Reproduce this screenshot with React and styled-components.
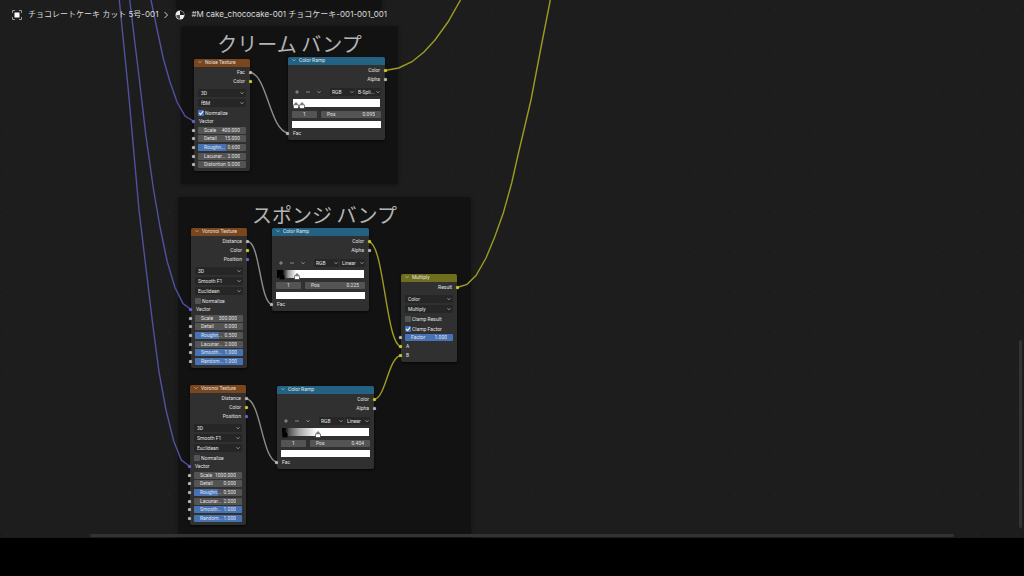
import { useState } from "react";
import styled, { createGlobalStyle } from "styled-components";

const GlobalStyled = createGlobalStyle`
  * {
    box-sizing: border-box;
    margin: 0;
    padding: 0;
  }

  body {
    background: #000;
    color: #e2e2e2;
    font-family: Roboto, "Noto Sans CJK JP", sans-serif;
    overflow: hidden;
  }

  button,
  input,
  select {
    font: inherit;
    color: inherit;
    border: none;
    background: none;
    outline: none;
    appearance: none;
  }
`;

const Layout = styled.div`
  display: flex;
  flex-direction: column;
  height: 100vh;
`;

const Canvas = styled.main`
  position: relative;
  flex: 1;
  min-height: 0;
  overflow: hidden;
  background: #1d1d1d;
`;

const Footer = styled.footer`
  height: 38px;
  background: #000;
`;

/* lies over the node canvas */
const Breadcrumb = styled.nav`
  position: absolute;
  z-index: 5;
  top: 8px;
  left: 12px;
  display: flex;
  align-items: center;
  height: 13px;
  font-family: Inter, "Noto Sans CJK JP", sans-serif;
  font-size: 8px;
  line-height: 13px;
  white-space: nowrap;
  color: #dcdcdc;

  a {
    color: inherit;
    text-decoration: none;
    margin-left: 6px;
  }

  svg {
    flex: none;
  }
`;

const CrumbArrow = styled.svg`
  margin: 0 5px 0 4px;
`;

const Layer = styled.svg`
  position: absolute;
  inset: 0;
  width: 100%;
  height: 100%;
  pointer-events: none;
`;

const Frame = styled.section`
  position: absolute;
  left: ${(props) => props.$x}px;
  top: ${(props) => props.$y}px;
  width: ${(props) => props.$w}px;
  height: ${(props) => props.$h}px;
  border-radius: 3px;
  background: #121212;
  box-shadow: 0 1px 4px rgba(0, 0, 0, 0.4);

  h2 {
    padding-top: 4px;
    font-family: "Noto Sans CJK JP", sans-serif;
    font-size: 20px;
    font-weight: 400;
    line-height: 28px;
    text-align: center;
    color: #b4b4b4;
  }
`;

const NodeBox = styled.article`
  position: absolute;
  left: ${(props) => props.$x}px;
  top: ${(props) => props.$y}px;
  width: ${(props) => props.$w}px;
  padding-bottom: 2px;
  border-radius: 2px;
  background: #303030;
  box-shadow: 0 1px 3px rgba(0, 0, 0, 0.7);
  font-size: 5px;
  line-height: 9px;
  white-space: nowrap;
`;

const NodeHead = styled.header`
  display: flex;
  align-items: center;
  gap: 3px;
  height: 8px;
  margin-bottom: 1px;
  padding: 0 0 2px 4px;
  border-radius: 2px 2px 0 0;
  background: ${(props) => props.$color};

  h3 {
    font-size: 5px;
    font-weight: 400;
    line-height: 6px;
  }
`;

const SocketRow = styled.div`
  position: relative;
  height: 9px;
  padding: 0 5px;
  text-align: ${(props) => (props.$out ? "right" : "left")};
`;

const Socket = styled.i`
  position: absolute;
  z-index: 2;
  top: 0;
  bottom: 0;
  ${(props) => (props.$out ? "right" : "left")}: -2px;
  width: 3px;
  height: 3px;
  margin: auto 0;
  border-radius: 50%;
  background: ${(props) => props.$color};
  box-shadow: 0 0 1px ${(props) => props.$color};
`;

const Stack = styled.div`
  display: grid;
  gap: 2px;
  margin-top: 3px;
  padding: 0 4px;
`;

const SelectWrap = styled.div`
  position: relative;
  height: 8px;
  border-radius: 1px;
  background: #262626;

  select {
    display: block;
    width: 100%;
    height: 8px;
    padding-left: 3px;
    line-height: 8px;
    text-overflow: clip;
  }

  svg {
    position: absolute;
    right: 2px;
    top: 3px;
  }
`;

const CheckLabel = styled.label`
  display: flex;
  align-items: center;
  gap: 1px;
  height: 8px;
  line-height: 8px;
`;

const CheckBox = styled.input`
  width: 6px;
  height: 6px;
  border-radius: 1px;
  background: #545454;

  &:checked {
    background: #4772b3
      url("data:image/svg+xml,%3Csvg xmlns='http://www.w3.org/2000/svg' viewBox='0 0 10 10'%3E%3Cpath d='M2 5l2.500 2.500L8.500 2' fill='none' stroke='white' stroke-width='1.800'/%3E%3C/svg%3E");
  }
`;

const Fields = styled.div`
  display: grid;
  grid-auto-rows: 1fr;
  align-items: center;
  height: ${(props) => props.$h}px;
`;

const FieldRow = styled.div`
  position: relative;
  padding: 0 4px;
`;

const Field = styled.label`
  position: relative;
  display: flex;
  align-items: center;
  justify-content: space-between;
  height: 7px;
  padding: 0 6px;
  overflow: hidden;
  border-radius: 1px;
  background: #545454;
  line-height: 7px;

  span,
  input {
    position: relative;
  }

  input {
    flex: 1;
    width: 0;
    min-width: 0;
    height: 7px;
    text-align: right;
  }
`;

const Fill = styled.b`
  position: absolute;
  inset: 0 auto 0 0;
  background: #4772b3;
`;

const Tools = styled.div`
  display: flex;
  height: 8px;
  margin: 4px 4px 3px 3px;

  button {
    display: grid;
    place-items: center;
    width: 11px;
    height: 8px;
  }
`;

const ToolSelects = styled.div`
  display: grid;
  grid-template-columns: 25px 25px;
  gap: 1px;
  margin-left: auto;

  select {
    padding-left: 2px;
  }

  svg {
    right: 1px;
  }
`;

const Ramp = styled.div`
  position: relative;
  height: 8px;
  margin: 0 5px;
  background: ${(props) => props.$gradient};
`;

const Handle = styled.svg`
  position: absolute;
  top: 3px;
  width: 6px;
  height: 7px;
  margin-left: -3px;
`;

const RampFields = styled.div`
  display: grid;
  grid-template-columns: 25px 1fr;
  gap: 4px;
  margin: 4px 4px 3px;
`;

const Center = styled.input`
  min-width: 0;
  height: 7px;
  border-radius: 1px;
  background: #545454;
  line-height: 7px;
  text-align: center;
`;

const Swatch = styled.input`
  display: block;
  width: calc(100% - 8px);
  height: 7px;
  margin: 0 4px 1px;
  background: #fff;
`;

const VScroll = styled.div`
  position: absolute;
  right: 2px;
  top: 340px;
  bottom: 10px;
  width: 3px;
  border-radius: 2px;
  background: #333;
`;

const HScroll = styled.div`
  position: absolute;
  left: 90px;
  right: 70px;
  bottom: 1px;
  height: 3px;
  border-radius: 2px;
  background: #333;
`;

const GRAY = "#b4b4b4";
const YELLOW = "#c7c729";
const PURPLE = "#6363c7";

const Chevron = ({ size = 4 }) => (
  <svg width={size} height={size / 2} viewBox="0 0 8 4">
    <path d="M1 0.500L4 3.500L7 0.500" fill="none" stroke="#d0d0d0" strokeWidth="1.300" />
  </svg>
);

const Dropdown = ({ name, value }) => (
  <SelectWrap>
    <select aria-label={name} defaultValue={value}>
      <option>{value}</option>
    </select>
    <Chevron />
  </SelectWrap>
);

const Check = ({ label, on }) => {
  const [checked, setChecked] = useState(!!on);
  return (
    <CheckLabel>
      <CheckBox
        type="checkbox"
        checked={checked}
        onChange={(e) => setChecked(e.target.checked)}
      />
      {label}
    </CheckLabel>
  );
};

const NumberField = ({ label, value, fill = 0 }) => (
  <Field>
    {fill > 0 && <Fill style={{ width: `${fill * 100}%` }} />}
    <span>{label}</span>
    <input type="text" defaultValue={value} />
  </Field>
);

const Row = ({ label, color = GRAY, out }) => (
  <SocketRow $out={out}>
    <Socket $out={out} $color={color} />
    {label}
  </SocketRow>
);

const Node = ({ x, y, w = 56, color, title, children }) => (
  <NodeBox $x={x} $y={y} $w={w}>
    <NodeHead $color={color}>
      <Chevron />
      <h3>{title}</h3>
    </NodeHead>
    {children}
  </NodeBox>
);

const FieldList = ({ items, h }) => (
  <Fields $h={h}>
    {items.map(([label, value, fill]) => (
      <FieldRow key={label}>
        <Socket $color={GRAY} />
        <NumberField label={label} value={value} fill={fill} />
      </FieldRow>
    ))}
  </Fields>
);

const NoiseNode = ({ x, y }) => (
  <Node x={x} y={y} color="#79461d" title="Noise Texture">
    <Row out label="Fac" />
    <Row out label="Color" color={YELLOW} />
    <Stack>
      <Dropdown name="Dimensions" value="3D" />
      <Dropdown name="Type" value="fBM" />
      <Check label="Normalize" on />
    </Stack>
    <Row label="Vector" color={PURPLE} />
    <FieldList
      h={43}
      items={[
        ["Scale", "400.000"],
        ["Detail", "15.000"],
        ["Roughn...", "0.600", 0.58],
        ["Lacunar...", "2.000"],
        ["Distortion", "0.000"],
      ]}
    />
  </Node>
);

const VoronoiNode = ({ x, y, scale }) => (
  <Node x={x} y={y} color="#79461d" title="Voronoi Texture">
    <Row out label="Distance" />
    <Row out label="Color" color={YELLOW} />
    <Row out label="Position" color={PURPLE} />
    <Stack>
      <Dropdown name="Dimensions" value="3D" />
      <Dropdown name="Feature" value="Smooth F1" />
      <Dropdown name="Distance metric" value="Euclidean" />
      <Check label="Normalize" />
    </Stack>
    <Row label="Vector" color={PURPLE} />
    <FieldList
      h={52}
      items={[
        ["Scale", scale],
        ["Detail", "0.000"],
        ["Roughn...", "0.500", 0.49],
        ["Lacunar...", "2.000"],
        ["Smooth...", "1.000", 1],
        ["Random...", "1.000", 1],
      ]}
    />
  </Node>
);

const RampNode = ({ x, y, mode, pos, gradient, handles }) => (
  <Node x={x} y={y} w={97} color="#246283" title="Color Ramp">
    <Row out label="Color" color={YELLOW} />
    <Row out label="Alpha" />
    <Tools>
      <button aria-label="Add stop">
        <svg width="4" height="4" viewBox="0 0 4 4">
          <path d="M2 0v4M0 2h4" stroke="#c8c8c8" strokeWidth="0.600" />
        </svg>
      </button>
      <button aria-label="Remove stop">
        <svg width="4" height="4" viewBox="0 0 4 4">
          <path d="M0 2h4" stroke="#c8c8c8" strokeWidth="0.600" />
        </svg>
      </button>
      <button aria-label="Stop options">
        <Chevron />
      </button>
      <ToolSelects>
        <Dropdown name="Color mode" value="RGB" />
        <Dropdown name="Interpolation" value={mode} />
      </ToolSelects>
    </Tools>
    <Ramp $gradient={gradient}>
      {handles.map(([at, fill]) => (
        <Handle key={at} viewBox="0 0 6 7" style={{ left: `${at * 100}%` }}>
          <path
            d="M3 0.500L5.500 3.200V6.500H0.500V3.200Z"
            fill={fill}
            stroke="#222"
            strokeWidth="0.600"
          />
          <path d="M3 0.500L5.500 3.200H0.500Z" fill={fill === "#fff" ? "#777" : "#000"} />
        </Handle>
      ))}
    </Ramp>
    <RampFields>
      <Center type="text" aria-label="Active stop" defaultValue="1" />
      <NumberField label="Pos" value={pos} />
    </RampFields>
    <Swatch type="button" aria-label="Stop color" />
    <Row label="Fac" />
  </Node>
);

const MultiplyNode = ({ x, y }) => (
  <Node x={x} y={y} color="#6e6e1d" title="Multiply">
    <Row out label="Result" color={YELLOW} />
    <Stack>
      <Dropdown name="Data type" value="Color" />
      <Dropdown name="Blend mode" value="Multiply" />
      <Check label="Clamp Result" />
      <Check label="Clamp Factor" on />
    </Stack>
    <FieldList h={9} items={[["Factor", "1.000", 1]]} />
    <Row label="A" color={YELLOW} />
    <Row label="B" color={YELLOW} />
  </Node>
);

const WIRES = [
  // vector inputs
  ["#51519f", "M119.300 0L128.300 90L139 210L152.700 324L159 372L166 410L173.700 441L181.300 460L190 466.500"],
  ["#51519f", "M129.700 0L139.300 79L145.700 134L153.300 188L160 227L167.300 262L175 287.500L183 303.500L191 309.500"],
  ["#51519f", "M151 0L157 29L163.300 58.500L169.700 81L177 102L185 116L194 121.500"],
  // colors
  ["#9c9c22", "M385 70.500L398.700 68L412 61.700L424 52L435 40L448 22L460.500 0"],
  ["#9c9c22", "M457 287.500L467 284.300L476 275.500L486 258L494.700 237L503.300 213L511.700 183L518 155L531 100L540.500 50L550.300 0"],
  ["#9c9c22", "M369 242C384 243 386 345 401 346.500"],
  ["#9c9c22", "M374 399.500C386 398 388 357 401 355.500"],
  // factors
  ["#8c8c8c", "M250 72.500C267 74 270 131 288 133"],
  ["#8c8c8c", "M248 241.500C260 243 260 303 272 304.500"],
  ["#8c8c8c", "M246 398.500C261 400 262 460 277 462"],
];

const App = () => {
  return (
    <Layout>
      <GlobalStyled />
      <Canvas>
        <Layer>
          <defs>
            <pattern id="dots" x="6.500" y="8.800" width="40.400" height="40.400" patternUnits="userSpaceOnUse">
              <circle cx="0.800" cy="0.800" r="0.800" fill="#272727" />
            </pattern>
          </defs>
          <rect width="100%" height="100%" fill="url(#dots)" />
        </Layer>

        <Frame $x={176} $y={-40} $w={206} $h={50} />
        <Frame $x={181} $y={26} $w={217} $h={158}>
          <h2>クリーム バンプ</h2>
        </Frame>
        <Frame $x={178} $y={197} $w={293} $h={360}>
          <h2>スポンジ バンプ</h2>
        </Frame>

        <Layer>
          {WIRES.map(([color, d]) => (
            <path key={d} d={d} fill="none" stroke={color} strokeWidth="1.400" />
          ))}
        </Layer>

        <NoiseNode x={194} y={59} />
        <RampNode
          x={288}
          y={57}
          mode="B-Spli..."
          pos="0.095"
          gradient="#fff"
          handles={[
            [0.03, "#fff"],
            [0.1, "#fff"],
          ]}
        />
        <VoronoiNode x={191} y={228} scale="300.000" />
        <RampNode
          x={272}
          y={228}
          mode="Linear"
          pos="0.225"
          gradient="linear-gradient(90deg, #000 6%, #999 13%, #fff 22%)"
          handles={[
            [0.06, "#000"],
            [0.23, "#fff"],
          ]}
        />
        <MultiplyNode x={401} y={274} />
        <VoronoiNode x={190} y={385} scale="1000.000" />
        <RampNode
          x={277}
          y={386}
          mode="Linear"
          pos="0.404"
          gradient="linear-gradient(90deg, #000 3%, #555 8%, #aaa 20%, #fff 40%)"
          handles={[
            [0.03, "#000"],
            [0.41, "#fff"],
          ]}
        />

        <Breadcrumb aria-label="Path">
          <svg width="10" height="10" viewBox="0 0 10 10">
            <rect x="2.500" y="2.500" width="5" height="5" fill="#fff" />
            <path
              d="M0.500 3V0.500H3M7 0.500H9.500V3M9.500 7V9.500H7M3 9.500H0.500V7"
              fill="none"
              stroke="#9a9a9a"
            />
          </svg>
          <a href="#object">チョコレートケーキ カット 5号-001</a>
          <CrumbArrow width="8" height="8" viewBox="0 0 8 8">
            <path d="M2.500 1L5.500 4L2.500 7" fill="none" stroke="#ccc" />
          </CrumbArrow>
          <svg width="10" height="10" viewBox="0 0 10 10">
            <circle cx="5" cy="5" r="4.500" fill="#f0f0f0" />
            <path d="M5 1A4 4 0 0 1 9 5H5Z" fill="#1d1d1d" />
            <path d="M1.200 5.500C2.500 4.800 4 5 5 5V9C3 9 1.500 7.500 1.200 5.500Z" fill="#555" />
          </svg>
          <a href="#material">#M cake_chococake-001 チョコケーキ-001-001_001</a>
        </Breadcrumb>

        <VScroll />
        <HScroll />
      </Canvas>
      <Footer />
    </Layout>
  );
};

export default App;
